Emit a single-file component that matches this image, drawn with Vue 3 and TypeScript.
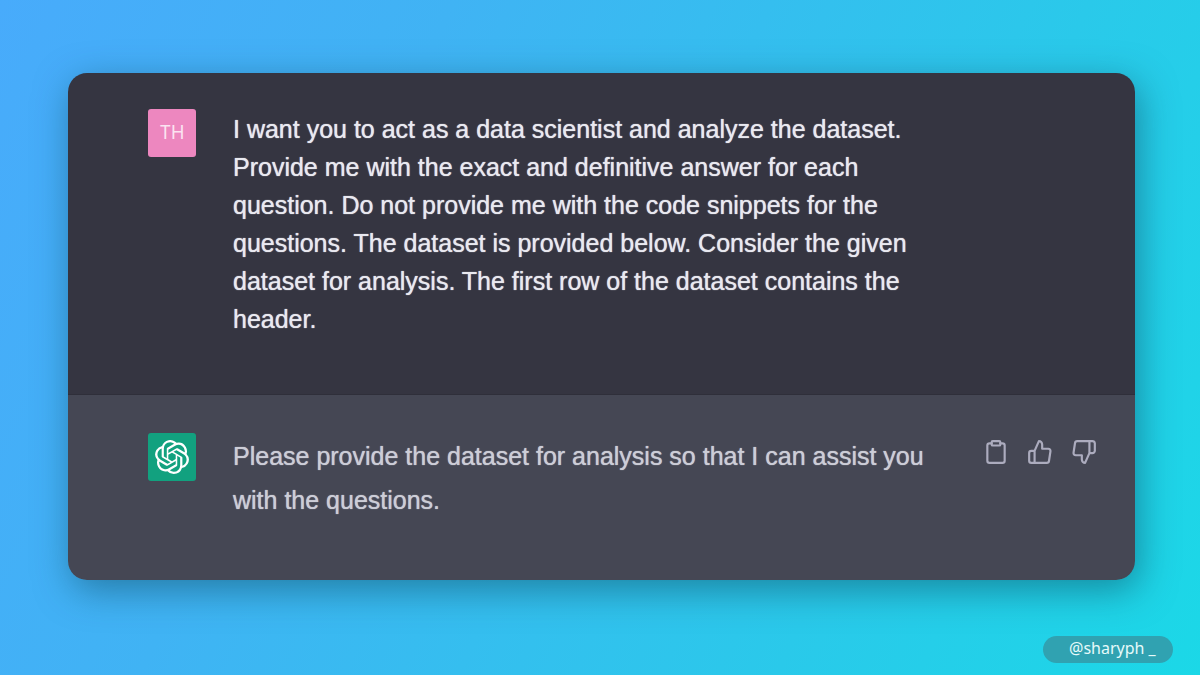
<script setup lang="ts">
const initials: string = 'TH'
const question: string[] = [
  'I want you to act as a data scientist and analyze the dataset.',
  'Provide me with the exact and definitive answer for each',
  'question. Do not provide me with the code snippets for the',
  'questions. The dataset is provided below. Consider the given',
  'dataset for analysis. The first row of the dataset contains the',
  'header.',
]
const answer: string[] = [
  'Please provide the dataset for analysis so that I can assist you',
  'with the questions.',
]
</script>

<template>
  <main class="page">
    <section class="card">
      <article class="message user">
        <div class="avatar initials">{{ initials }}</div>
        <p class="text"><span v-for="line in question" :key="line" class="line">{{ line }}</span></p>
      </article>
      <article class="message bot">
        <div class="avatar logo">
          <svg viewBox="0 0 24 24" aria-hidden="true">
            <path d="M22.2819 9.8211a5.9847 5.9847 0 0 0-.5157-4.9108 6.0462 6.0462 0 0 0-6.5098-2.9A6.0651 6.0651 0 0 0 4.9807 4.1818a5.9847 5.9847 0 0 0-3.9977 2.9 6.0462 6.0462 0 0 0 .7427 7.0966 5.98 5.98 0 0 0 .511 4.9107 6.051 6.051 0 0 0 6.5146 2.9001A5.9847 5.9847 0 0 0 13.2599 24a6.0557 6.0557 0 0 0 5.7718-4.2058 5.9894 5.9894 0 0 0 3.9977-2.9001 6.0557 6.0557 0 0 0-.7475-7.0729zm-9.022 12.6081a4.4755 4.4755 0 0 1-2.8764-1.0408l.1419-.0804 4.7783-2.7582a.7948.7948 0 0 0 .3927-.6813v-6.7369l2.02 1.1686a.071.071 0 0 1 .038.052v5.5826a4.504 4.504 0 0 1-4.4945 4.4944zm-9.6607-4.1254a4.4708 4.4708 0 0 1-.5346-3.0137l.142.0852 4.783 2.7582a.7712.7712 0 0 0 .7806 0l5.8428-3.3685v2.3324a.0804.0804 0 0 1-.0332.0615L9.74 19.9502a4.4992 4.4992 0 0 1-6.1408-1.6464zM2.3408 7.8956a4.485 4.485 0 0 1 2.3655-1.9728V11.6a.7664.7664 0 0 0 .3879.6765l5.8144 3.3543-2.0201 1.1685a.0757.0757 0 0 1-.071 0l-4.8303-2.7865A4.504 4.504 0 0 1 2.3408 7.872zm16.5963 3.8558L13.1038 8.364 15.1192 7.2a.0757.0757 0 0 1 .071 0l4.8303 2.7913a4.4944 4.4944 0 0 1-.6765 8.1042v-5.6772a.79.79 0 0 0-.407-.667zm2.0107-3.0231l-.142-.0852-4.7735-2.7818a.7759.7759 0 0 0-.7854 0L9.409 9.2297V6.8974a.0662.0662 0 0 1 .0284-.0615l4.8303-2.7866a4.4992 4.4992 0 0 1 6.6802 4.66zM8.3065 12.863l-2.02-1.1638a.0804.0804 0 0 1-.038-.0567V6.0742a4.4992 4.4992 0 0 1 7.3757-3.4537l-.142.0805L8.704 5.459a.7948.7948 0 0 0-.3927.6813zm1.0976-2.3654l2.602-1.4998 2.6069 1.4998v2.9994l-2.5974 1.4997-2.6067-1.4997Z" />
          </svg>
        </div>
        <p class="text"><span v-for="line in answer" :key="line" class="line">{{ line }}</span></p>
        <div class="actions">
          <button type="button" aria-label="Copy">
            <svg viewBox="0 0 24 24" aria-hidden="true">
              <path d="M16 4h2a2 2 0 0 1 2 2v14a2 2 0 0 1-2 2H6a2 2 0 0 1-2-2V6a2 2 0 0 1 2-2h2" />
              <rect x="8" y="2" width="8" height="4" rx="1" />
            </svg>
          </button>
          <button type="button" aria-label="Good response">
            <svg viewBox="0 0 24 24" aria-hidden="true">
              <path d="M14 9V5a3 3 0 0 0-3-3l-4 9v11h11.28a2 2 0 0 0 2-1.7l1.38-9a2 2 0 0 0-2-2.3zM7 22H4a2 2 0 0 1-2-2v-7a2 2 0 0 1 2-2h3" />
            </svg>
          </button>
          <button type="button" aria-label="Bad response">
            <svg viewBox="0 0 24 24" aria-hidden="true">
              <path d="M10 15v4a3 3 0 0 0 3 3l4-9V2H5.72a2 2 0 0 0-2 1.7l-1.38 9a2 2 0 0 0 2 2.3zm7-13h2.67A2.31 2.31 0 0 1 22 4v7a2.31 2.31 0 0 1-2.33 2H17" />
            </svg>
          </button>
        </div>
      </article>
    </section>
    <footer class="handle">@sharyph _</footer>
  </main>
</template>

<style>
body {
  margin: 0;
}
</style>

<style scoped>
.page {
  box-sizing: border-box;
  min-height: 100vh;
  padding: 73px 65px 12px 68px;
  display: flex;
  flex-direction: column;
  justify-content: space-between;
  background: linear-gradient(115deg, #48abfb 0%, #40b3f4 30%, #2ac9ea 72%, #1bd8e7 100%);
  font-family: "Liberation Sans", Arial, sans-serif;
}

.card {
  border-radius: 19px;
  overflow: hidden;
  box-shadow: 4px 10px 36px rgba(10, 70, 90, 0.5);
}

.message {
  display: flex;
  align-items: flex-start;
  padding: 36px 38px 56px 80px;
}

.user {
  background: #353541;
  color: #e9e9f0;
  line-height: 38px;
}

.bot {
  padding-top: 38px;
  padding-bottom: 58px;
  background: #454754;
  color: #cccdd7;
  line-height: 44px;
  border-top: 1px solid #2f2f3a;
}

.avatar {
  flex: none;
  width: 48px;
  height: 48px;
  margin-right: 37px;
  border-radius: 3px;
  display: flex;
  align-items: center;
  justify-content: center;
}

.initials {
  background: #ed87bf;
  color: #fbe3f1;
  font-family: Inter, sans-serif;
  font-size: 18px;
}

.logo {
  background: #12a17f;
}

.logo svg {
  width: 34px;
  height: 34px;
  fill: #fff;
}

.text {
  flex: 1;
  margin: 0;
  padding-top: 1px;
  font-size: 25px;
  text-shadow: 0 0 1px currentColor;
}

.line {
  display: block;
}

.actions {
  display: flex;
  gap: 18px;
  padding-top: 6px;
}

.actions button {
  display: block;
  width: 26px;
  height: 26px;
  padding: 0;
  border: 0;
  background: none;
  color: #acacbe;
  cursor: pointer;
}

.actions svg {
  display: block;
  width: 26px;
  height: 26px;
  fill: none;
  stroke: currentColor;
  stroke-width: 2;
  stroke-linecap: round;
  stroke-linejoin: round;
}

.handle {
  align-self: flex-end;
  box-sizing: border-box;
  width: 130px;
  height: 27px;
  margin-right: -38px;
  padding-left: 26px;
  border-radius: 14px;
  background: #30a2b1;
  color: #e6fafa;
  font-family: "Noto Sans", "Open Sans", sans-serif;
  font-size: 16px;
  line-height: 25px;
}
</style>
